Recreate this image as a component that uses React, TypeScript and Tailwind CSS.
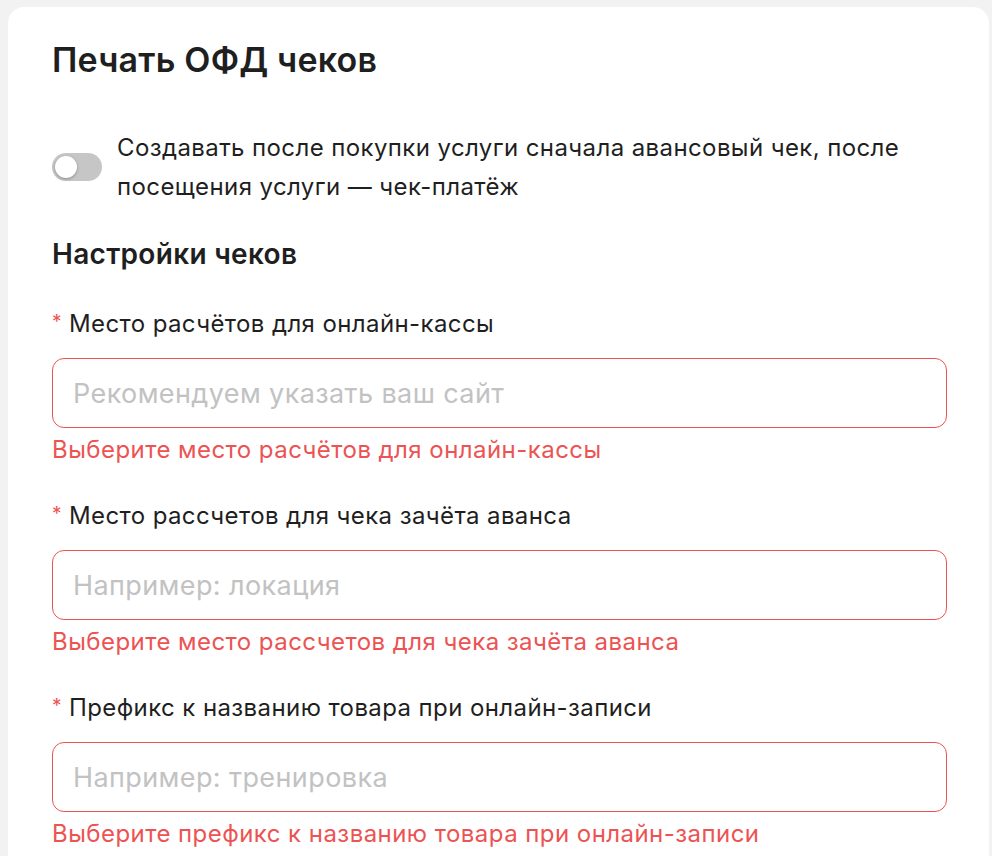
import React from 'react';

const font = { fontFamily: 'Inter, "Noto Sans", sans-serif' };

const fields = [
  {
    label: 'Место расчётов для онлайн-кассы',
    placeholder: 'Рекомендуем указать ваш сайт',
    error: 'Выберите место расчётов для онлайн-кассы',
  },
  {
    label: 'Место рассчетов для чека зачёта аванса',
    placeholder: 'Например: локация',
    error: 'Выберите место рассчетов для чека зачёта аванса',
  },
  {
    label: 'Префикс к названию товара при онлайн-записи',
    placeholder: 'Например: тренировка',
    error: 'Выберите префикс к названию товара при онлайн-записи',
  },
];

export default function App() {
  return (
    <div className="min-h-screen bg-[#f2f2f2] pt-[7px] pl-2 pr-[3px] overflow-hidden" style={font}>
      <div className="bg-white rounded-2xl pl-[44px] pr-[42px] pt-[33px] pb-10 text-[#1f1f1f]">
        <h1 className="text-[34px] leading-[40px] font-semibold tracking-[0.2px]">Печать ОФД чеков</h1>

        <div className="mt-[48px] flex items-center gap-[15px]">
          <button className="relative w-[50px] h-[28px] shrink-0 rounded-full bg-[#c6c6c6]">
            <span className="absolute left-[3px] top-[3px] w-[22px] h-[22px] rounded-full bg-white shadow-[0_1px_3px_rgba(0,0,0,0.3)]" />
          </button>
          <p className="text-[24px] leading-[39px] tracking-[0.4px]">
            Создавать после покупки услуги сначала авансовый чек, после посещения услуги — чек-платёж
          </p>
        </div>

        <h2 className="mt-[30px] text-[28px] leading-[36px] font-semibold tracking-[0.3px]">Настройки чеков</h2>

        <div className="mt-[36px] flex flex-col gap-[35px]">
          {fields.map((f) => (
            <div key={f.label}>
              <label className="flex items-center h-[32px] text-[24px] tracking-[0.4px]">
                <span className="text-[#ef5350] text-[19px] mr-[7px] -mt-1">*</span>
                {f.label}
              </label>
              <input
                placeholder={f.placeholder}
                className="mt-[18px] w-full h-[70px] rounded-xl border border-[#ec5353] px-[20px] text-[27px] tracking-[0.4px] placeholder:text-[#c2c2c2] outline-none"
                style={font}
              />
              <div className="mt-[7px] h-[30px] leading-[30px] text-[24px] tracking-[0.45px] text-[#ec5353]">{f.error}</div>
            </div>
          ))}
        </div>
      </div>
    </div>
  );
}
